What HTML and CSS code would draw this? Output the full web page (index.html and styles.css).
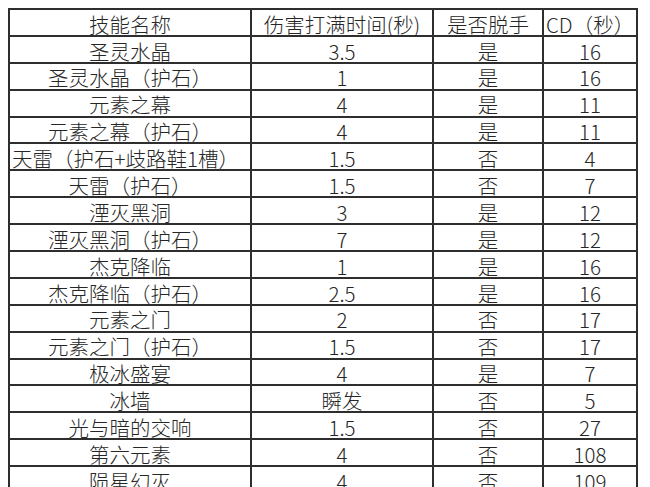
FILE: index.html
```html
<!DOCTYPE html>
<html lang="zh-CN">
<head>
<meta charset="utf-8">
<title>技能表</title>
<link rel="stylesheet" href="styles.css">
</head>
<body>
<div class="sheet">
  <div class="cell">技能名称</div><div class="cell">伤害打满时间(秒)</div><div class="cell">是否脱手</div><div class="cell start">CD（秒）</div>
  <div class="cell">圣灵水晶</div><div class="cell">3.5</div><div class="cell">是</div><div class="cell">16</div>
  <div class="cell">圣灵水晶（护石）</div><div class="cell">1</div><div class="cell">是</div><div class="cell">16</div>
  <div class="cell">元素之幕</div><div class="cell">4</div><div class="cell">是</div><div class="cell">11</div>
  <div class="cell">元素之幕（护石）</div><div class="cell">4</div><div class="cell">是</div><div class="cell">11</div>
  <div class="cell start">天雷（护石+歧路鞋1槽）</div><div class="cell">1.5</div><div class="cell">否</div><div class="cell">4</div>
  <div class="cell">天雷（护石）</div><div class="cell">1.5</div><div class="cell">否</div><div class="cell">7</div>
  <div class="cell">湮灭黑洞</div><div class="cell">3</div><div class="cell">是</div><div class="cell">12</div>
  <div class="cell">湮灭黑洞（护石）</div><div class="cell">7</div><div class="cell">是</div><div class="cell">12</div>
  <div class="cell">杰克降临</div><div class="cell">1</div><div class="cell">是</div><div class="cell">16</div>
  <div class="cell">杰克降临（护石）</div><div class="cell">2.5</div><div class="cell">是</div><div class="cell">16</div>
  <div class="cell">元素之门</div><div class="cell">2</div><div class="cell">否</div><div class="cell">17</div>
  <div class="cell">元素之门（护石）</div><div class="cell">1.5</div><div class="cell">否</div><div class="cell">17</div>
  <div class="cell">极冰盛宴</div><div class="cell">4</div><div class="cell">是</div><div class="cell">7</div>
  <div class="cell">冰墙</div><div class="cell">瞬发</div><div class="cell">否</div><div class="cell">5</div>
  <div class="cell">光与暗的交响</div><div class="cell">1.5</div><div class="cell">否</div><div class="cell">27</div>
  <div class="cell">第六元素</div><div class="cell">4</div><div class="cell">否</div><div class="cell">108</div>
  <div class="cell">陨星幻灭</div><div class="cell">4</div><div class="cell">否</div><div class="cell">109</div>
</div>
</body>
</html>
```
FILE: styles.css
```css
html, body {
  margin: 0;
  padding: 0;
  background: #ffffff;
  overflow: hidden;
}
body {
  font-family: "Noto Sans CJK SC", "Noto Sans", sans-serif;
  color: #262626;
}
.sheet {
  margin: 8px 0 0 8px;
  width: 630px;
  box-sizing: border-box;
  display: grid;
  grid-template-columns: 240px 180px 108px 92px;
  grid-auto-rows: 24.9px;
  gap: 2px;
  padding: 2px;
  background: #2e2e2e;
}
.cell {
  background: #ffffff;
  display: flex;
  align-items: center;
  justify-content: center;
  font-size: 20.5px;
  font-weight: 300;
  line-height: 1;
  padding-top: 3px;
  box-sizing: border-box;
  white-space: nowrap;
  overflow: visible;
}
.cell.start {
  justify-content: flex-start;
  padding-left: 2px;
}
```
